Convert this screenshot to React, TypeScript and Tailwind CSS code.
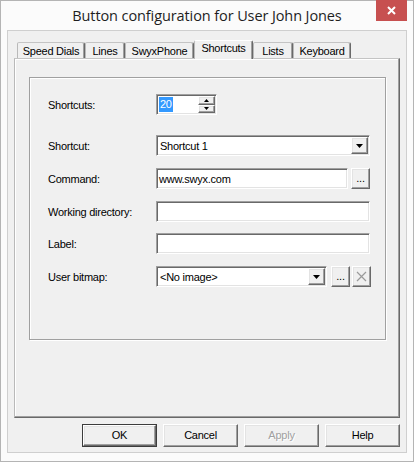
import React from "react";

const raised =
  "border border-t-white border-l-white border-b-[#696969] border-r-[#696969] shadow-[inset_-1px_-1px_0_#a0a0a0,inset_1px_1px_0_#e3e3e3] bg-[#f0f0f0]";
const sunken =
  "border border-t-[#a0a0a0] border-l-[#a0a0a0] border-b-white border-r-white shadow-[inset_1px_1px_0_#696969,inset_-1px_-1px_0_#e3e3e3] bg-white";

type Tab = { label: string; width: string; active?: boolean };

const tabs: Tab[] = [
  { label: "Speed Dials", width: "w-[68px]" },
  { label: "Lines", width: "w-[40px]" },
  { label: "SwyxPhone", width: "w-[69px]" },
  { label: "Shortcuts", width: "w-[59px]", active: true },
  { label: "Lists", width: "w-[40px]" },
  { label: "Keyboard", width: "w-[58px]" },
];

function DownArrow({ w = 7, h = 4 }: { w?: number; h?: number }) {
  return (
    <svg width={w} height={h} viewBox={`0 0 ${w} ${h}`}>
      <polygon points={`0,0 ${w},0 ${w / 2},${h}`} fill="#000" />
    </svg>
  );
}

function UpArrow({ w = 5, h = 3 }: { w?: number; h?: number }) {
  return (
    <svg width={w} height={h} viewBox={`0 0 ${w} ${h}`}>
      <polygon points={`0,${h} ${w},${h} ${w / 2},0`} fill="#000" />
    </svg>
  );
}

function Label({ children }: { children: React.ReactNode }) {
  return <div className="w-[108px] shrink-0 pt-[1px]">{children}</div>;
}

function ComboBox({ value, width }: { value: string; width: string }) {
  return (
    <div className={`${sunken} ${width} h-[21px] flex items-stretch p-[1px]`}>
      <div className="flex-1 flex items-center pl-[2px] pt-[1px]">{value}</div>
      <div className={`${raised} w-[17px] flex items-center justify-center`}>
        <DownArrow />
      </div>
    </div>
  );
}

function DotsButton() {
  return (
    <div className={`${raised} w-[19px] h-[21px] flex items-end justify-center pb-[4px] leading-none`}>
      ...
    </div>
  );
}

function DialogButton({ children, isDefault, disabled }: { children: React.ReactNode; isDefault?: boolean; disabled?: boolean }) {
  const inner = (
    <div
      className={`${raised} flex-1 flex items-center justify-center ${
        disabled ? "text-[#a0a0a0] [text-shadow:1px_1px_0_#fff]" : "text-black"
      }`}
    >
      {children}
    </div>
  );
  if (isDefault) {
    return <div className="w-[75px] h-[23px] border border-[#3c3c3c] flex">{inner}</div>;
  }
  return <div className="w-[75px] h-[23px] flex">{inner}</div>;
}

export default function App() {
  return (
    <div className="w-[414px] h-[462px] border border-[#b4b4b4] bg-[#fbfbfb] flex flex-col relative font-['Liberation_Sans',Arial,sans-serif] text-[11px] tracking-[-0.25px] text-black">
      {/* title bar */}
      <div className="h-[29px] flex items-center justify-center pt-[1px]">
        <span className="font-['Open_Sans','Noto_Sans',sans-serif] text-[14.5px] tracking-[-0.1px] text-[#1e1e1e]">
          Button configuration for User John Jones
        </span>
      </div>
      <div className="absolute top-[-1px] right-[6px] w-[31px] h-[21px] bg-[#c75050] flex items-center justify-center">
        <svg width="9" height="9" viewBox="0 0 9 9">
          <path d="M1 1 L8 8 M8 1 L1 8" stroke="#fff" strokeWidth="2" />
        </svg>
      </div>

      {/* client area */}
      <div className="mx-[6px] h-[423px] border border-[#cfcfcf] bg-[#f0f0f0] pt-[9px] pl-[6px] pr-[6px] flex flex-col">
        {/* tab strip */}
        <div className="h-[18px] flex items-end pl-[3px]">
          {tabs.map((t) =>
            t.active ? (
              <div
                key={t.label}
                className={`${t.width} h-[19px] -mb-px relative z-10 bg-[#f0f0f0] border-t border-l border-r border-t-white border-l-[#b9b9b9] border-r-[#696969] shadow-[inset_-1px_0_0_#a0a0a0] rounded-t-[2px] flex items-center justify-center pb-[3px]`}
              >
                {t.label}
              </div>
            ) : (
              <div
                key={t.label}
                className={`${t.width} h-[16px] bg-[#f0f0f0] border-t border-l border-r border-t-[#c4c4c4] border-l-[#b9b9b9] border-r-[#696969] shadow-[inset_-1px_0_0_#a0a0a0] rounded-t-[2px] flex items-center justify-center pt-[1px]`}
              >
                {t.label}
              </div>
            )
          )}
        </div>

        {/* tab page */}
        <div className="h-[360px] border border-t-[#c4c4c4] border-l-[#b9b9b9] border-r-[#696969] border-b-[#696969] shadow-[inset_-1px_-1px_0_#a0a0a0,inset_1px_1px_0_#fff] pl-[14px] pt-[18px]">
          <div className="w-[357px] h-[263px] border border-[#a0a0a0] shadow-[inset_1px_1px_0_#fff,1px_1px_0_#fff] pl-[18px] pt-[16px] flex flex-col">
            {/* Shortcuts count */}
            <div className="flex items-center h-[21px]">
              <Label>Shortcuts:</Label>
              <div className={`${sunken} w-[61px] h-[21px] flex items-stretch p-[1px]`}>
                <div className="flex-1 flex items-center pl-[1px]">
                  <span className="bg-[#3399ff] text-white h-[15px] px-[1px] flex items-center">20</span>
                </div>
                <div className="w-[17px] flex flex-col">
                  <div className={`${raised} h-[9px] flex items-center justify-center`}>
                    <UpArrow />
                  </div>
                  <div className={`${raised} h-[9px] flex items-center justify-center`}>
                    <DownArrow w={5} h={3} />
                  </div>
                </div>
              </div>
            </div>

            {/* Shortcut selector */}
            <div className="flex items-center h-[21px] mt-[20px]">
              <Label>Shortcut:</Label>
              <ComboBox value="Shortcut 1" width="w-[214px]" />
            </div>

            {/* Command */}
            <div className="flex items-center h-[21px] mt-[12px]">
              <Label>Command:</Label>
              <div className={`${sunken} w-[192px] h-[21px] flex items-center pl-[2px] pt-[1px]`}>www.swyx.com</div>
              <div className="ml-[3px]">
                <DotsButton />
              </div>
            </div>

            {/* Working directory */}
            <div className="flex items-center h-[21px] mt-[12px]">
              <Label>Working directory:</Label>
              <div className={`${sunken} w-[214px] h-[21px]`} />
            </div>

            {/* Label */}
            <div className="flex items-center h-[21px] mt-[11px]">
              <Label>Label:</Label>
              <div className={`${sunken} w-[214px] h-[21px]`} />
            </div>

            {/* User bitmap */}
            <div className="flex items-center h-[21px] mt-[12px]">
              <Label>User bitmap:</Label>
              <ComboBox value="<No image>" width="w-[171px]" />
              <div className="ml-[4px]">
                <DotsButton />
              </div>
              <div className={`${raised} ml-[2px] w-[19px] h-[21px] flex items-center justify-center`}>
                <svg width="11" height="11" viewBox="0 0 11 11">
                  <path d="M1 1 L10 10 M10 1 L1 10" stroke="#9a9a9a" strokeWidth="1.2" />
                </svg>
              </div>
            </div>
          </div>
        </div>

        {/* dialog buttons */}
        <div className="mt-[6px] flex justify-end gap-[6px]">
          <DialogButton isDefault>OK</DialogButton>
          <DialogButton>Cancel</DialogButton>
          <DialogButton disabled>Apply</DialogButton>
          <DialogButton>Help</DialogButton>
        </div>
      </div>
    </div>
  );
}
